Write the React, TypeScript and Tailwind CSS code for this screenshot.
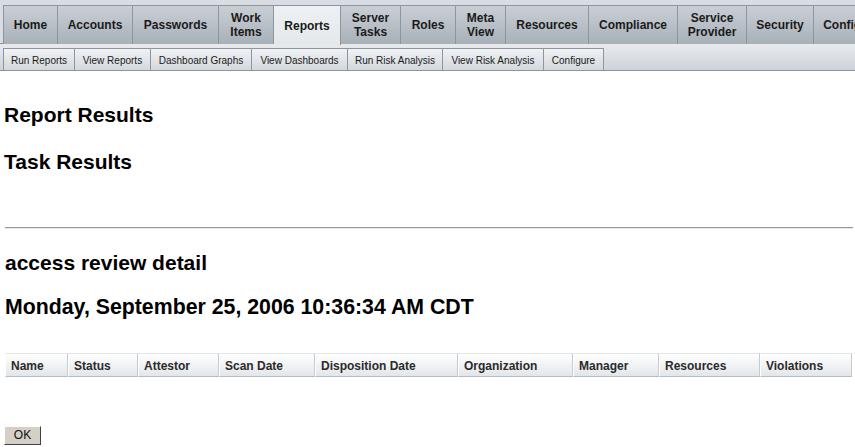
import React from "react";

const tabs: { label: string[]; w: number; active?: boolean }[] = [
  { label: ["Home"], w: 54 },
  { label: ["Accounts"], w: 75 },
  { label: ["Passwords"], w: 86 },
  { label: ["Work", "Items"], w: 55 },
  { label: ["Reports"], w: 67, active: true },
  { label: ["Server", "Tasks"], w: 60 },
  { label: ["Roles"], w: 55 },
  { label: ["Meta", "View"], w: 50 },
  { label: ["Resources"], w: 83 },
  { label: ["Compliance"], w: 89 },
  { label: ["Service", "Provider"], w: 69 },
  { label: ["Security"], w: 67 },
  { label: ["Configure"], w: 76 },
];

const subs: { label: string; w: number }[] = [
  { label: "Run Reports", w: 71 },
  { label: "View Reports", w: 76 },
  { label: "Dashboard Graphs", w: 101 },
  { label: "View Dashboards", w: 96 },
  { label: "Run Risk Analysis", w: 95 },
  { label: "View Risk Analysis", w: 101 },
  { label: "Configure", w: 60 },
];

const cols: { label: string; w: number }[] = [
  { label: "Name", w: 63 },
  { label: "Status", w: 70 },
  { label: "Attestor", w: 81 },
  { label: "Scan Date", w: 96 },
  { label: "Disposition Date", w: 143 },
  { label: "Organization", w: 115 },
  { label: "Manager", w: 86 },
  { label: "Resources", w: 101 },
  { label: "Violations", w: 92 },
];

export default function App() {
  return (
    <div
      className="w-[855px] h-[447px] overflow-hidden bg-white text-black"
      style={{ fontFamily: '"Liberation Sans", Arial, sans-serif' }}
    >
      {/* main tabs */}
      <div className="h-[44px] bg-[#d8dde3] pt-[5px] pl-[3px] flex border-b border-[#8d969f] relative">
        <div className="flex h-[39px] border-l border-[#8d969f]">
          {tabs.map((t, i) => (
            <div
              key={i}
              style={{ width: t.w }}
              className={
                "shrink-0 flex flex-col items-center justify-center border-t border-r border-[#8d969f] text-[12px] font-bold leading-[14px] text-[#1a1a1a] " +
                (t.active
                  ? "bg-gradient-to-b from-[#eef1f3] to-[#e4e8eb] h-[40px] relative z-10 border-b-0"
                  : "bg-gradient-to-b from-[#c9cfd5] to-[#a8b0b8]")
              }
            >
              {t.label.map((l, j) => (
                <span key={j} className="whitespace-nowrap">
                  {l}
                </span>
              ))}
            </div>
          ))}
        </div>
      </div>
      {/* sub nav */}
      <div className="h-[27px] bg-gradient-to-b from-[#e8ebee] to-[#cdd3d9] pt-[4px] pl-[3px] border-b border-[#8d969f] flex">
        <div className="flex h-[22px] border-l border-[#8d969f]">
          {subs.map((s, i) => (
            <div
              key={i}
              style={{ width: s.w }}
              className="shrink-0 flex items-center justify-center pt-[1px] border-t border-r border-[#8d969f] bg-gradient-to-b from-[#f0f2f4] to-[#d3d8dd] text-[10px] text-[#1a1a1a] whitespace-nowrap"
            >
              {s.label}
            </div>
          ))}
        </div>
      </div>

      <div className="pl-[4px] pr-[2px]">
        <h2 className="mt-[31px] text-[21px] font-bold leading-[25px]">Report Results</h2>
        <h2 className="mt-[22px] text-[21px] font-bold leading-[25px]">Task Results</h2>
        <div className="mt-[53px] ml-[1px] h-[2px] border-t border-[#999] border-b border-b-[#e8e8e8]" />
        <h2 className="mt-[21px] ml-[1px] text-[21px] font-bold leading-[25px]">access review detail</h2>
        <h1 className="mt-[19px] ml-[1px] text-[21.3px] font-bold leading-[26px]">
          Monday, September 25, 2006 10:36:34 AM CDT
        </h1>
        <div className="mt-[33px] ml-[1px] flex h-[24px]">
          {cols.map((c, i) => (
            <div
              key={i}
              style={{ width: c.w }}
              className="shrink-0 flex items-center pl-[5px] pt-[1px] text-[12px] font-bold text-[#2a2a2a] bg-gradient-to-b from-[#ffffff] to-[#e3e6e9] border-t border-[#e4e6e8] border-b border-b-[#b5bcc3] border-r border-r-[#c5cbd1] border-l border-l-white whitespace-nowrap"
            >
              {c.label}
            </div>
          ))}
        </div>
        <button className="mt-[49px] w-[37px] h-[19px] bg-[#d4d0c8] border border-t-white border-l-white border-r-[#404040] border-b-[#404040] text-[12px] leading-[17px] text-[#111]">
          OK
        </button>
      </div>
    </div>
  );
}
